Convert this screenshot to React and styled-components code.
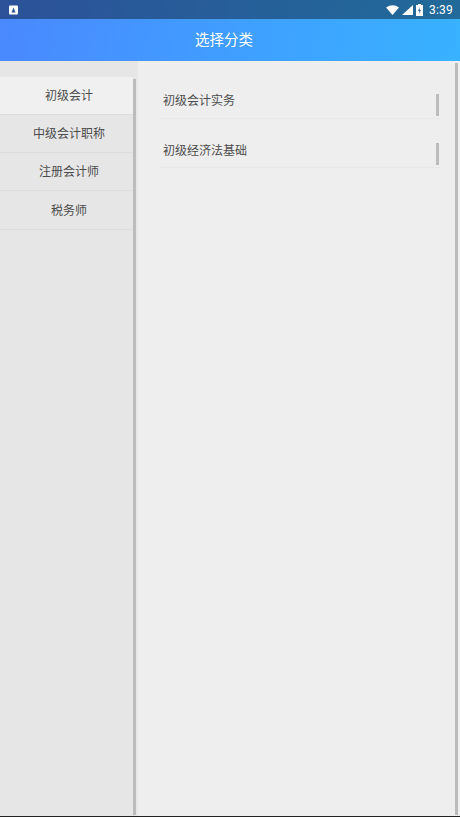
import React from 'react'
import styled, { createGlobalStyle } from 'styled-components'

const categories = ['初级会计', '中级会计职称', '注册会计师', '税务师']
const subjects = ['初级会计实务', '初级经济法基础']

const GlobalStyle = createGlobalStyle`
  html, body {
    margin: 0;
    padding: 0;
    background: #eeeeee;
  }
  * {
    box-sizing: border-box;
  }
`

const Page = styled.div`
  width: 460px;
  height: 817px;
  display: flex;
  flex-direction: column;
  overflow: hidden;
  font-family: Roboto, 'Noto Sans CJK SC', sans-serif;
  border-bottom: 1px solid #222;
`

const Top = styled.div`
  background: linear-gradient(100deg, #4a88ff 0%, #3fa0ff 55%, #38b2ff 100%);
  flex-shrink: 0;
`

const StatusBar = styled.div`
  height: 19px;
  background: rgba(0, 0, 0, 0.4);
  display: flex;
  align-items: center;
  justify-content: space-between;
  padding: 0 7px 0 9px;
  color: #fff;
`

const StatusRight = styled.div`
  display: flex;
  align-items: center;
  gap: 3px;
`

const Time = styled.span`
  font-size: 12px;
  margin-left: 3px;
  letter-spacing: 0.2px;
`

const Title = styled.div`
  height: 42px;
  display: flex;
  align-items: center;
  justify-content: center;
  color: #fff;
  font-size: 14.5px;
  padding: 0 12px 3px 0;
`

const Body = styled.div`
  flex: 1;
  display: flex;
  min-height: 0;
`

const Sidebar = styled.div`
  width: 138px;
  flex-shrink: 0;
  background: #e6e6e6;
  padding-top: 16px;
  position: relative;
`

const CategoryItem = styled.div`
  height: 38px;
  width: 133px;
  display: flex;
  align-items: center;
  justify-content: center;
  font-size: 12px;
  color: #4c4c4c;
  padding: 0 0 3px 5px;
  background: ${(p) => (p.$active ? '#f0f0f0' : 'transparent')};
  border-bottom: 1px solid #dcdcdc;

  &:nth-child(4) {
    height: 39px;
    padding-bottom: 2px;
  }
`

const ScrollBar = styled.div`
  position: absolute;
  width: 3px;
  top: ${(p) => p.$top}px;
  bottom: 1px;
  right: ${(p) => p.$right}px;
  background: #bcbcbc;
`

const Content = styled.div`
  flex: 1;
  background: #eeeeee;
  padding: 20px 20px 0 22px;
  position: relative;
`

const RowText = styled.span`
  margin-bottom: 1px;
`

const SubjectRow = styled.div`
  height: 38px;
  margin-bottom: 11px;
  padding-left: 3px;
  display: flex;
  align-items: center;
  justify-content: space-between;
  font-size: 12px;
  color: #4c4c4c;
  border-bottom: 1px solid #e8e8e8;

  & + & ${RowText} {
    margin: 1px 0 0;
  }
`

const RowMark = styled.span`
  width: 3px;
  height: 22px;
  margin-top: 11px;
  margin-right: 1px;
  background: #bcbcbc;
`

function App() {
  return (
    <React.Fragment>
      <GlobalStyle />
      <Page>
        <Top>
          <StatusBar>
            <svg width="10" height="10" viewBox="0 0 10 10">
              <rect width="9" height="9" y="0.5" rx="1" fill="#fff" />
              <path d="M2.5 7.5 L4.5 2.5 L6.5 7.5 Z" fill="#2f5596" />
            </svg>
            <StatusRight>
              <svg width="13" height="10" viewBox="0 0 13 10">
                <path d="M0 2.5 Q6.5 -2 13 2.5 L6.5 10 Z" fill="#fff" />
              </svg>
              <svg width="11" height="10" viewBox="0 0 11 10">
                <path d="M0 10 L11 0 V10 Z" fill="#fff" />
              </svg>
              <svg width="7" height="12" viewBox="0 0 7 12">
                <path d="M2 0 H5 V1 H7 V12 H0 V1 H2 Z" fill="#fff" />
                <path d="M4 3 L2 7 H3.4 L3 10 L5 6 H3.6 Z" fill="#2a5f94" />
              </svg>
              <Time>3:39</Time>
            </StatusRight>
          </StatusBar>
          <Title>选择分类</Title>
        </Top>
        <Body>
          <Sidebar>
            {categories.map((name, i) => (
              <CategoryItem key={name} $active={i === 0}>
                {name}
              </CategoryItem>
            ))}
            <ScrollBar $top={18} $right={2} />
          </Sidebar>
          <Content>
            {subjects.map((name) => (
              <SubjectRow key={name}>
                <RowText>{name}</RowText>
                <RowMark />
              </SubjectRow>
            ))}
            <ScrollBar $top={2} $right={2} />
          </Content>
        </Body>
      </Page>
    </React.Fragment>
  )
}

export default App
